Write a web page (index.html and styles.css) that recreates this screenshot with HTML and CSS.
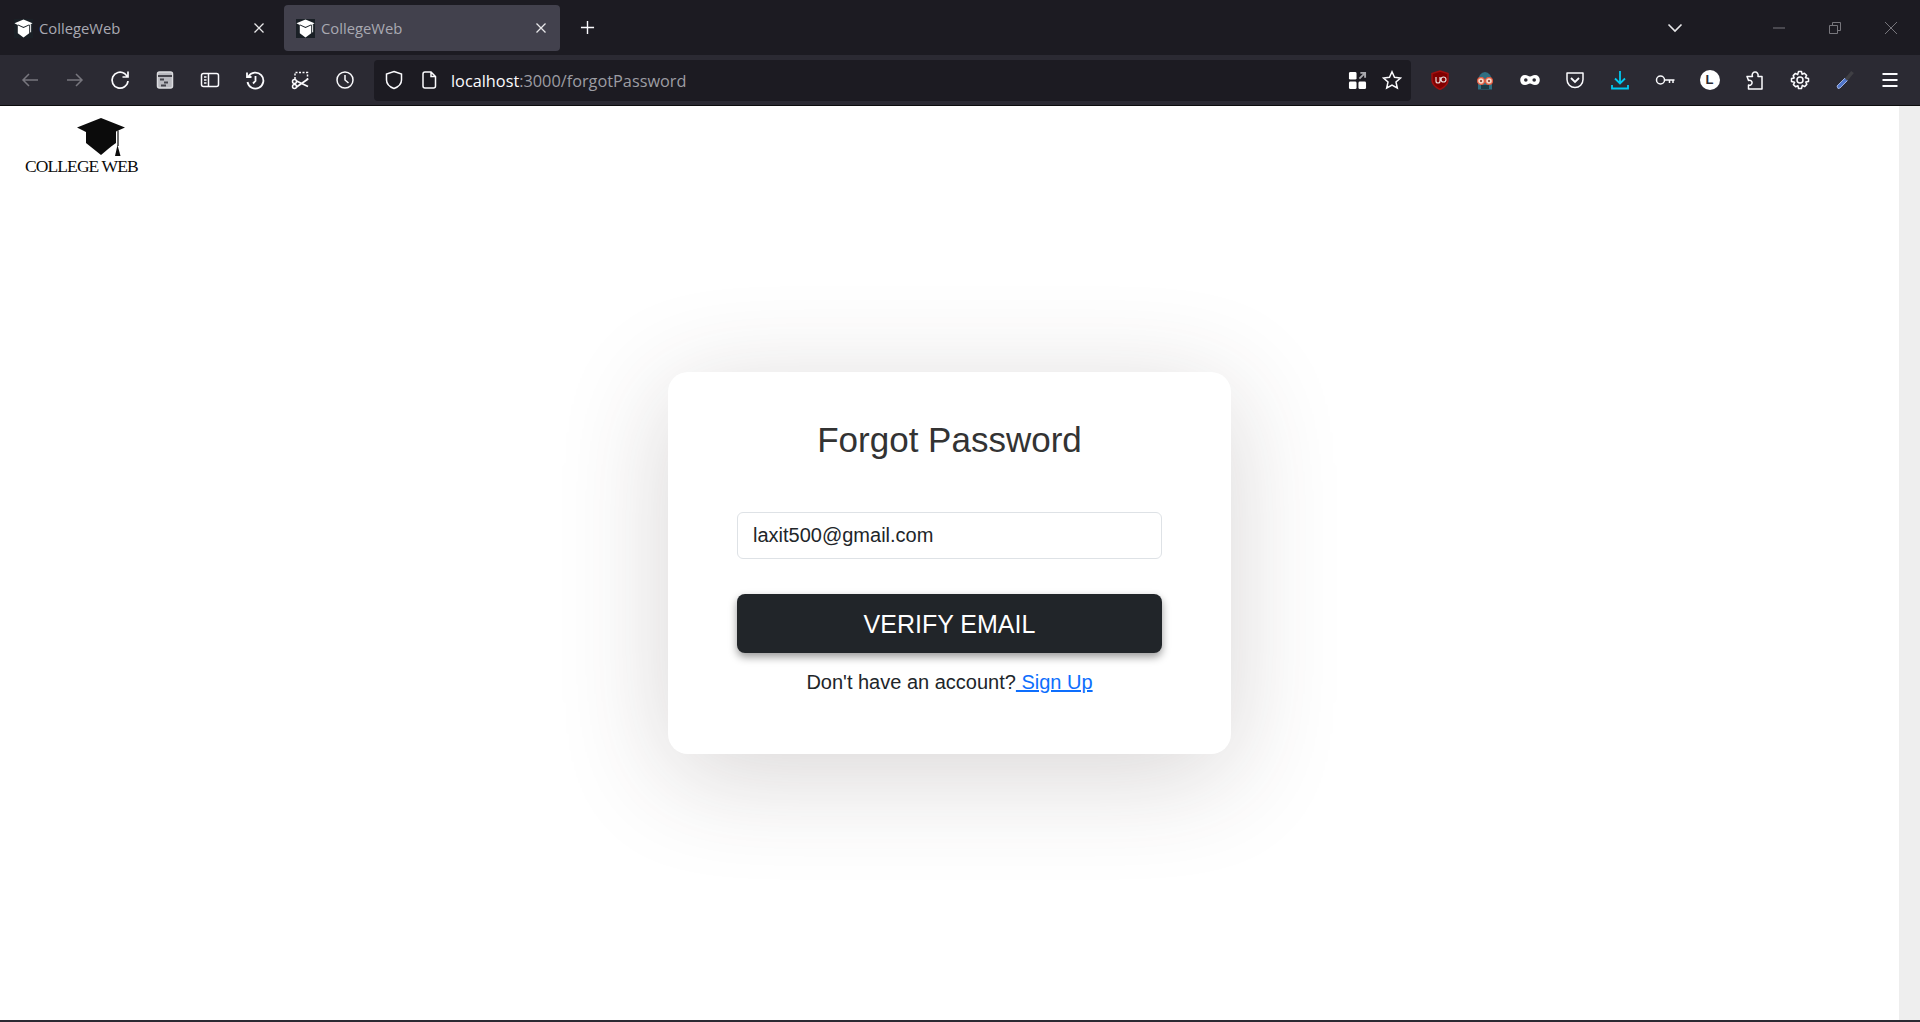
FILE: index.html
```html
<!DOCTYPE html>
<html lang="en">
<head>
	<meta charset="UTF-8">
	<title>CollegeWeb</title>
	<link rel="stylesheet" href="styles.css">
</head>
<body>
	<svg class="defs" width="0" height="0">
		<symbol id="cap" viewBox="0 0 50 38">
			<path d="M25 0 49 9.5 40 13.5V25C34 29 30 33 25 37 20 33 15 29 10 25V14L1 9.5Z" fill="currentColor"/>
			<path d="M42 12.5V28" stroke="currentColor" stroke-width="1.2" fill="none"/>
			<path d="M41.5 27 44.5 38H39Z" fill="currentColor"/>
		</symbol>
		<symbol id="favicon" viewBox="0 0 20 20">
			<rect width="20" height="20" fill="#1a2026"/>
			<path d="M10 .5 19.500 4.500 16 6.200V15L10 19.500 4 15V6.200L.5 4.500Z" fill="#fff"/>
			<path d="M4 6.200 10 8.800 16 6.200" stroke="#1a2026" stroke-width="1.100" fill="none"/>
			<path d="M17.500 5.500V14" stroke="#fff" stroke-width="1" fill="none"/>
		</symbol>
	</svg>

	<!-- tab strip -->
	<div class="tabbar">
		<div class="tab">
			<svg class="favicon"><use href="#favicon"/></svg>
			<span class="tab-title">CollegeWeb</span>
			<svg class="tab-close" viewBox="0 0 12 12"><path d="M1.5 1.5 10.5 10.5M10.5 1.5 1.5 10.5"/></svg>
		</div>
		<div class="tab tab-active">
			<svg class="favicon"><use href="#favicon"/></svg>
			<span class="tab-title">CollegeWeb</span>
			<svg class="tab-close" viewBox="0 0 12 12"><path d="M1.5 1.5 10.5 10.5M10.5 1.5 1.5 10.5"/></svg>
		</div>
		<svg class="new-tab" viewBox="0 0 16 16"><path d="M8 1V15M1 8H15"/></svg>
		<svg class="tab-list" viewBox="0 0 16 10"><path d="M1.5 1.5 8 8 14.5 1.5"/></svg>
		<div class="window-controls">
			<svg class="win-btn" viewBox="0 0 14 14"><path d="M1 7H13"/></svg>
			<svg class="win-btn" viewBox="0 0 14 14"><path d="M1.5 4.5H9.5V12.5H1.5ZM4.5 4.5V1.5H12.5V9.5H9.5"/></svg>
			<svg class="win-btn" viewBox="0 0 14 14"><path d="M1 1 13 13M13 1 1 13"/></svg>
		</div>
	</div>

	<!-- toolbar -->
	<div class="toolbar">
		<div class="tool"><svg class="icon dim" viewBox="0 0 20 20"><path d="M18 10H3M9 4 3 10 9 16"/></svg></div>
		<div class="tool"><svg class="icon dim" viewBox="0 0 20 20"><path d="M2 10H17M11 4 17 10 11 16"/></svg></div>
		<div class="tool"><svg class="icon" viewBox="0 0 20 20"><path d="M18 11A8 8 0 1 1 14.500 3.500L17.500 6.500M18 1.500V7H12.500" stroke-width="1.700"/></svg></div>
		<div class="tool"><svg class="icon" viewBox="0 0 20 20"><rect x="2.5" y="2" width="15" height="16" rx="2" fill="#b9b9bf" stroke="#dcdce0"/><path d="M3 6H17" stroke="#45444c" stroke-width="2"/><path d="M5 9.500H9M9 12.500H13M6 15.500H11" stroke="#45444c" stroke-width="2"/></svg></div>
		<div class="tool"><svg class="icon" viewBox="0 0 20 20"><rect x="1.5" y="3.5" width="17" height="13" rx="2"/><path d="M8.5 3.5V16.5M4 7H6.5M4 10H6.5M4 13H6.5"/></svg></div>
		<div class="tool"><svg class="icon" viewBox="0 0 20 20"><path d="M3.5 6.5A8 8 0 1 1 2.5 12M2 2.5V7H6.5M10.5 6V11L8 13.5" stroke-width="1.8"/></svg></div>
		<div class="tool"><svg class="icon" viewBox="0 0 20 20"><path d="M5 9V2.5H17.5V10" stroke-dasharray="2 1.5"/><circle cx="4.5" cy="11.5" r="2"/><circle cx="4.5" cy="16.5" r="2"/><path d="M6.5 11 18 16.5M6.5 17 18 9" stroke-width="1.8"/></svg></div>
		<div class="tool"><svg class="icon" viewBox="0 0 20 20"><circle cx="10" cy="10" r="8"/><path d="M10 5V10L13.5 13"/></svg></div>

		<div class="urlbar">
			<svg class="icon url-icon" viewBox="0 0 20 20"><path d="M10 1.5 17.5 4V10C17.5 14 14 17 10 18.5 6 17 2.5 14 2.5 10V4Z"/></svg>
			<svg class="icon url-icon" viewBox="0 0 20 20"><path d="M4 4A2 2 0 0 1 6 2H12L16.5 6.5V16A2 2 0 0 1 14.5 18H6A2 2 0 0 1 4 16ZM12 2V6.5H16.5"/></svg>
			<span class="url"><span class="url-host">localhost</span>:3000/forgotPassword</span>
			<svg class="url-grid" viewBox="0 0 20 20"><rect x="1" y="1" width="8" height="8" rx="1.5" fill="#fff"/><rect x="1" y="11" width="8" height="8" rx="1.5" fill="#fff"/><rect x="11" y="11" width="8" height="8" rx="1.5" fill="#fff"/><path d="M12 8 18 2M13 2H18V7" fill="none" stroke="#a9a9ae" stroke-width="2"/></svg>
			<svg class="icon url-star" viewBox="0 0 20 20"><path d="M10 1.8 12.5 7.3 18.5 8 14 12 15.3 18 10 15 4.700 18 6 12 1.500 8 7.500 7.300Z"/></svg>
		</div>

		<div class="tool tool-first"><svg class="icon" viewBox="0 0 20 20"><path d="M10 1 18 3.500V10C18 14.500 14 17.500 10 19.500 6 17.500 2 14.500 2 10V3.500Z" fill="#800000" stroke="#a01010"/><path d="M6 7V11A2 2 0 0 0 10 11V7M11 9.500A2.500 2.500 0 1 0 16 9.500 2.500 2.500 0 1 0 11 9.500" stroke="#e8d8d8" stroke-width="1.200"/></svg></div>
		<div class="tool"><svg class="icon" viewBox="0 0 20 20"><path d="M3 11A7 9 0 0 1 17 11V19.500H3Z" fill="#2f6f82" stroke="none"/><path d="M6 15H14V19H6Z" fill="#1d3a44" stroke="none"/><circle cx="6" cy="11" r="3.400" fill="#f1d5c5" stroke="#e7583b" stroke-width="1.200"/><circle cx="14" cy="11" r="3.400" fill="#f1d5c5" stroke="#e7583b" stroke-width="1.200"/><circle cx="6" cy="11" r="1" fill="#7a2a1c" stroke="none"/><circle cx="14" cy="11" r="1" fill="#7a2a1c" stroke="none"/></svg></div>
		<div class="tool"><svg class="icon" viewBox="0 0 20 20"><path d="M5 5C7.500 5 8.500 6.500 10 6.500S12.500 5 15 5C18 5 19.800 7 19.800 10S18 15 15 15C12.500 15 11.500 13.500 10 13.500S7.500 15 5 15C2 15 .2 13 .2 10S2 5 5 5Z" fill="#fff" stroke="none"/><circle cx="5.800" cy="10" r="1.800" fill="#2b2a33" stroke="none"/><circle cx="14.200" cy="10" r="1.800" fill="#2b2a33" stroke="none"/></svg></div>
		<div class="tool"><svg class="icon" viewBox="0 0 20 20"><path d="M2 3H18V9.500A8 8 0 0 1 2 9.500Z" stroke-linejoin="round"/><path d="M6 8 10 12 14 8" stroke-width="1.800"/></svg></div>
		<div class="tool"><svg class="icon icon-blue" viewBox="0 0 20 20"><path d="M10 1V13M5 8.500 10 13.500 15 8.500M2 15V18.500H18V15" stroke-width="1.800"/></svg></div>
		<div class="tool"><svg class="icon" viewBox="0 0 20 20"><circle cx="5.500" cy="10" r="4"/><path d="M9.500 10H19.500M14.500 10V13M18 10V13"/></svg></div>
		<div class="tool"><div class="avatar">L</div></div>
		<div class="tool"><svg class="icon" viewBox="0 0 20 20"><path d="M2 6.500H7.500A3 3 0 1 1 13 6V6.500H17V19H3.500V15A2.500 2.500 0 1 0 3.500 10.500Z" stroke-linejoin="round"/></svg></div>
		<div class="tool"><svg class="icon" viewBox="0 0 20 20"><circle cx="10" cy="10" r="3"/><path d="M8.500 1.500H11.500L12 4.200 14.400 3.200 16.600 5.400 15.400 7.700 18.500 8.500V11.500L15.800 12 16.800 14.400 14.600 16.600 12.300 15.400 11.500 18.500H8.500L8 15.800 5.600 16.800 3.400 14.600 4.600 12.300 1.500 11.500V8.500L4.200 8 3.200 5.600 5.400 3.400 7.700 4.600Z" stroke-linejoin="round"/></svg></div>
		<div class="tool"><svg class="icon" viewBox="0 0 20 20"><path d="M3 18.500 2 16 10 8 12.500 10.500 5 18Z" fill="#4f74c8" stroke="#9fb2e0" stroke-width="1"/><path d="M11 7 13.500 9.500M13 7.500 17.500 2" stroke="#3f3f44" stroke-width="3.500"/></svg></div>
		<div class="tool"><svg class="icon" viewBox="0 0 20 20"><path d="M2.500 4H17.500M2.500 10H17.500M2.500 16H17.500" stroke-width="1.800"/></svg></div>
	</div>

	<!-- page inside the browser -->
	<div class="viewport">
		<main class="page">
			<header class="brand">
				<svg class="brand-cap"><use href="#cap"/></svg>
				<div class="brand-name">COLLEGE WEB</div>
			</header>
			<div class="card">
				<h3 class="card-title">Forgot Password</h3>
				<input class="field" type="email" value="laxit500@gmail.com">
				<button class="submit" type="button">VERIFY EMAIL</button>
				<p class="signup">Don't have an account?<a href="#"> Sign Up</a></p>
			</div>
		</main>
		<div class="scrollbar"></div>
	</div>
</body>
</html>
```

FILE: styles.css
```css
html, body {
	margin: 0;
	padding: 0;
	height: 100%;
	overflow: hidden;
	background: #fff;
}
body {
	display: flex;
	flex-direction: column;
	font-family: "Liberation Sans", Arial, sans-serif;
	color: #212529;
}
.defs {
	position: absolute;
}

/* tab strip */
.tabbar {
	height: 55px;
	flex: none;
	display: flex;
	align-items: center;
	background: #1c1b22;
	padding-left: 2px;
	box-sizing: border-box;
	gap: 6px;
}
.tab {
	width: 276px;
	height: 46px;
	display: flex;
	align-items: center;
	box-sizing: border-box;
	padding: 0 13px 0 12px;
	border-radius: 4px;
	margin-top: 1px;
}
.tab-active {
	background: #42414d;
}
.favicon {
	width: 19px;
	height: 19px;
	flex: none;
}
.tab-title {
	flex: 1;
	margin-left: 6px;
	font-family: "Open Sans", sans-serif;
	font-size: 14.8px;
	color: #a9a9b2;
}
.tab-close {
	width: 12px;
	height: 12px;
	fill: none;
	stroke: #e8e8ea;
	stroke-width: 1.3;
}
.new-tab {
	width: 15px;
	height: 15px;
	margin-left: 14px;
	fill: none;
	stroke: #fbfbfe;
	stroke-width: 1.5;
}
.tab-list {
	width: 16px;
	height: 10px;
	margin-left: auto;
	fill: none;
	stroke: #e8e8ea;
	stroke-width: 1.6;
}
.window-controls {
	display: flex;
	gap: 42px;
	margin-left: 83px;
	padding-right: 22px;
}
.win-btn {
	width: 14px;
	height: 14px;
	fill: none;
	stroke: #77767c;
	stroke-width: 1;
}

/* toolbar */
.toolbar {
	height: 51px;
	flex: none;
	display: flex;
	align-items: center;
	background: #2b2a33;
	padding: 0 8px 0 7px;
	box-sizing: border-box;
	border-bottom: 1px solid #0c0c0d;
}
.tool {
	width: 45px;
	height: 40px;
	flex: none;
	display: flex;
	align-items: center;
	justify-content: center;
}
.tool-first {
	margin-left: 6px;
}
.icon {
	width: 20px;
	height: 20px;
	fill: none;
	stroke: #fbfbfe;
	stroke-width: 1.5;
}
.icon.dim {
	stroke: #77767e;
}
.icon-blue {
	stroke: #00c8f0;
}
.avatar {
	width: 20px;
	height: 20px;
	border-radius: 50%;
	background: #fff;
	color: #2b2a33;
	font-size: 13px;
	font-weight: bold;
	line-height: 20px;
	text-align: center;
}
.urlbar {
	flex: 1;
	height: 41px;
	margin-left: 7px;
	display: flex;
	align-items: center;
	background: #1c1b22;
	border-radius: 4px;
	padding: 0 9px 0 10px;
}
.url-icon {
	margin-right: 15px;
}
.url {
	flex: 1;
	margin-left: -3px;
	padding-top: 2px;
	font-family: "Open Sans", sans-serif;
	font-size: 16.3px;
	color: #9d9da3;
}
.url-host {
	color: #fbfbfe;
}
.url-grid {
	width: 19px;
	height: 19px;
	margin-right: 15px;
}

/* page */
.viewport {
	flex: 1;
	display: flex;
	min-height: 0;
	border-bottom: 2px solid #2b2a33;
}
.page {
	flex: 1;
	display: grid;
	grid-template-rows: 1fr auto 1fr;
	justify-items: center;
}
.scrollbar {
	width: 21px;
	background: #eee;
}
.brand {
	justify-self: start;
	margin: 12px 0 0 25px;
	display: flex;
	flex-direction: column;
	color: #0b0b0b;
}
.brand-cap {
	width: 50px;
	height: 38px;
	margin-left: 51px;
}
.brand-name {
	font-family: "Liberation Serif", serif;
	font-size: 17.5px;
	letter-spacing: -0.9px;
	line-height: 20px;
}
.card {
	grid-row: 2;
	width: 563px;
	height: 382px;
	box-sizing: border-box;
	padding: 47px 69px 0;
	background: #fff;
	border-radius: 20px;
	box-shadow: 0 20px 110px rgba(60, 45, 45, 0.2);
}
.card-title {
	margin: 0 0 51px;
	font-size: 35px;
	font-weight: normal;
	line-height: 42px;
	text-align: center;
	color: #333;
}
.field {
	display: block;
	width: 100%;
	height: 47px;
	box-sizing: border-box;
	padding: 0 15px;
	border: 1px solid #dee2e6;
	border-radius: 6px;
	font-family: inherit;
	font-size: 20px;
	color: #212529;
}
.submit {
	display: block;
	width: 100%;
	height: 59px;
	margin-top: 35px;
	padding: 2px 0 0;
	border: none;
	border-radius: 8px;
	background: #212529;
	color: #fff;
	font-family: inherit;
	font-size: 25px;
	box-shadow: 0 4px 8px rgba(0, 0, 0, 0.4);
}
.signup {
	margin: 14px 0 0;
	font-size: 20px;
	line-height: 30px;
	text-align: center;
}
.signup a {
	color: #0d6efd;
	white-space: pre;
}
```
